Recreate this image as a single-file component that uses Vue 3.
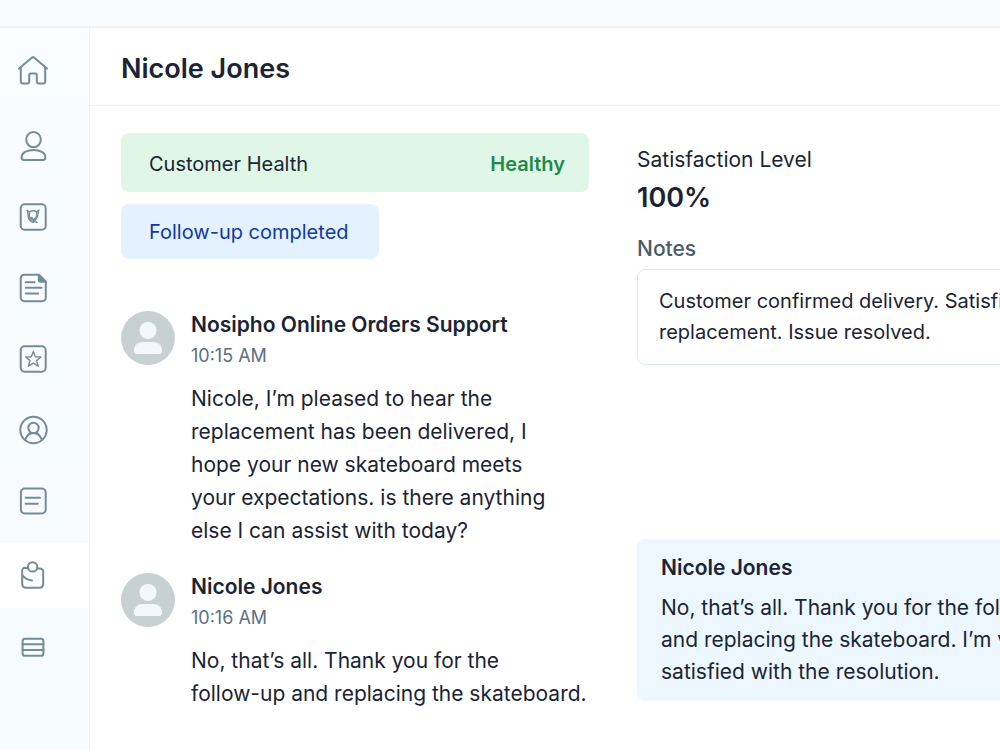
<script setup>
const navGroups = [
  [{ icon: 'home', label: 'Home' }],
  [
    { icon: 'person', label: 'Contacts' },
    { icon: 'badge', label: 'Brands' },
    { icon: 'document', label: 'Documents' },
    { icon: 'star', label: 'Favourites' },
    { icon: 'account', label: 'Account' },
    { icon: 'note', label: 'Notes' },
  ],
  [
    { icon: 'clip', label: 'Orders', active: true },
    { icon: 'rows', label: 'Records' },
  ],
]

const messages = [
  {
    author: 'Nosipho Online Orders Support',
    time: '10:15 AM',
    text: 'Nicole, I’m pleased to hear the\nreplacement has been delivered, I\nhope your new skateboard meets\nyour expectations. is there anything\nelse I can assist with today?',
  },
  {
    author: 'Nicole Jones',
    time: '10:16 AM',
    text: 'No, that’s all. Thank you for the\nfollow-up and replacing the skateboard.',
  },
]

const notes = 'Customer confirmed delivery. Satisfied\nreplacement. Issue resolved.'
const reply = 'No, that’s all. Thank you for the follow-up\nand replacing the skateboard. I’m very\nsatisfied with the resolution.'
</script>

<template>
  <div class="app">
    <div class="topbar"></div>
    <div class="body">
      <nav class="sidebar" aria-label="Main">
        <div v-for="(group, g) in navGroups" :key="g" class="nav-group">
          <button
            v-for="item in group"
            :key="item.icon"
            type="button"
            class="nav-item"
            :class="{ active: item.active }"
            :aria-label="item.label"
          >
            <svg class="icon" viewBox="0 0 32 32" aria-hidden="true">
              <g v-if="item.icon === 'home'">
                <path d="M2 13.6 L15.4 2.2 Q16 1.7 16.6 2.2 L30 13.6" />
                <path d="M3.8 12.4 V26.6 Q3.8 28.6 5.8 28.6 H10.2 Q12.2 28.6 12.2 26.6 V20.2 Q12.2 18.6 13.8 18.6 H18.2 Q19.8 18.6 19.8 20.2 V26.6 Q19.8 28.6 21.8 28.6 H26.2 Q28.2 28.6 28.2 26.6 V12.4" />
              </g>
              <g v-else-if="item.icon === 'person'">
                <ellipse cx="16.5" cy="9.6" rx="7.3" ry="7.7" />
                <path d="M7 30 Q4.6 30 4.6 27.6 C4.6 22.6 10 19.9 16.5 19.9 S28.4 22.6 28.4 27.6 Q28.4 30 26 30 Z" />
              </g>
              <g v-else-if="item.icon === 'badge'">
                <rect x="3.7" y="3.3" width="25" height="25.4" rx="4" />
                <g class="fine">
                  <path d="M10.6 10.2 L11.3 16 C11.8 18.5 13.8 20.2 16 21.5 C18.3 19.6 20.3 17 21 13.4 L21.5 9.6" />
                  <path d="M10 9.3 L12.4 11 Q16 8.6 19.6 10.8 L22 9" />
                  <path d="M12.6 11.2 Q11.6 14.8 13.4 17.4 L16 18.8 L18.6 17 Q20.6 14 19.6 11.2" />
                  <path d="M13 17.6 L14.8 16.4 L17 20.6 L20 21.2" />
                </g>
              </g>
              <g v-else-if="item.icon === 'document'">
                <path d="M7.7 2.8 H21.8 L28.8 9.8 V25 Q28.8 29.2 24.8 29.2 H7.7 Q3.7 29.2 3.7 25 V6.8 Q3.7 2.8 7.7 2.8 Z" />
                <path class="filled" d="M21.8 2.8 V8 Q21.8 9.8 23.6 9.8 H28.8 Z" />
                <path d="M8.8 10.2 H17.6 M8.8 15.8 H24.6 M8.8 21.5 H21.2" />
              </g>
              <g v-else-if="item.icon === 'star'">
                <rect x="3.7" y="3.3" width="25" height="25.4" rx="4" />
                <path class="fine" d="M16.3 8.4 L18.3 13.8 L24 14 L19.6 17.6 L21.2 23.2 L16.3 20.1 L11.4 23.2 L13 17.6 L8.6 14 L14.3 13.8 Z" />
              </g>
              <g v-else-if="item.icon === 'account'">
                <circle cx="16.5" cy="16" r="13.2" />
                <circle cx="16.5" cy="14" r="5.2" />
                <path d="M8 25.8 C9.4 22.4 11.6 20.6 13.4 18.4 M25 25.8 C23.6 22.4 21.4 20.6 19.6 18.4 M12.5 20.3 Q16.5 17.9 20.5 20.3" />
              </g>
              <g v-else-if="item.icon === 'note'">
                <rect x="3.9" y="3.5" width="24.8" height="25" rx="4" />
                <path d="M8.6 12.8 H23 M8.6 18.8 H20.8" />
              </g>
              <g v-else-if="item.icon === 'clip'">
                <path d="M11 8.4 L8.2 7.7 Q5.2 7.6 5.2 10.6 V23.8 Q5.2 27.8 9.2 27.8 H22.2 Q26.2 27.8 26.2 23.8 V12 Q26.2 8.4 22.6 8.4 H20.6" />
                <circle cx="15.6" cy="6.9" r="4.7" />
                <path d="M5.2 15.2 Q9.2 20 15 20.5" />
              </g>
              <g v-else>
                <rect x="5.6" y="7.8" width="20.8" height="17" rx="2.4" />
                <path d="M5.6 13.3 H26.4 M5.6 18.9 H26.4" />
              </g>
            </svg>
          </button>
        </div>
      </nav>

      <main class="main">
        <header class="header">
          <h1 class="title">Nicole Jones</h1>
        </header>

        <div class="content">
          <section class="conversation">
            <div class="health">
              <span>Customer Health</span>
              <strong class="health-value">Healthy</strong>
            </div>
            <div class="followup">Follow-up completed</div>

            <div class="messages">
              <article v-for="message in messages" :key="message.time" class="message">
                <svg class="avatar" viewBox="0 0 54 54" aria-hidden="true">
                  <circle cx="27" cy="27" r="27" fill="#c7d0d3" />
                  <circle cx="27" cy="19.3" r="8.6" fill="#f3f6fa" />
                  <path d="M13 39.6 C13 34 17 31 22 31 H32 C37 31 41 34 41 39.6 Q41 43 38.4 43 H15.6 Q13 43 13 39.6 Z" fill="#f3f6fa" />
                </svg>
                <div>
                  <h2 class="author">{{ message.author }}</h2>
                  <time class="time">{{ message.time }}</time>
                  <p class="text">{{ message.text }}</p>
                </div>
              </article>
            </div>
          </section>

          <aside class="details">
            <div class="label">Satisfaction Level</div>
            <div class="score">100%</div>
            <h2 class="notes-title">Notes</h2>
            <p class="notes">{{ notes }}</p>
            <article class="reply">
              <h2 class="author">Nicole Jones</h2>
              <p class="reply-text">{{ reply }}</p>
            </article>
          </aside>
        </div>
      </main>
    </div>
  </div>
</template>

<style>
body {
  margin: 0;
  background: #ffffff;
}
</style>

<style scoped>
.app {
  display: flex;
  flex-direction: column;
  min-height: 100vh;
  overflow: hidden;
  color: #1a2435;
  font-family: Inter, "Liberation Sans", sans-serif;
  font-size: 21px;
  line-height: 28px;
}
h1,
h2,
p {
  margin: 0;
}
.topbar {
  height: 26px;
  background: #f8fcff;
  border-bottom: 2px solid #edf3f7;
}
.body {
  display: flex;
  flex: 1;
}
.sidebar {
  display: flex;
  flex: none;
  flex-direction: column;
  gap: 10px;
  width: 89px;
  padding-top: 10px;
  background: linear-gradient(#fafdff, #f6fbff);
  border-right: 1px solid #e9f1f7;
}
.nav-group {
  display: flex;
  flex-direction: column;
  gap: 6px;
}
.nav-item {
  display: flex;
  align-items: center;
  height: 65px;
  padding: 0 17px;
  border: 0;
  background: transparent;
  color: #748c9a;
  cursor: pointer;
}
.nav-item.active {
  background: #ffffff;
}
.icon {
  width: 32px;
  height: 32px;
  fill: none;
  stroke: currentColor;
  stroke-width: 2;
  stroke-linecap: round;
  stroke-linejoin: round;
}
.fine {
  stroke-width: 1.4;
}
.filled {
  fill: currentColor;
}
.main {
  flex: 1;
  min-width: 0;
}
.header {
  padding: 22px 31px 18px;
  border-bottom: 1px solid #e6eef4;
}
.title {
  font-size: 27px;
  line-height: 37px;
  font-weight: 600;
}
.content {
  display: grid;
  grid-template-columns: 468px minmax(500px, 1fr);
  gap: 48px;
  padding: 27px 31px;
}
.health {
  display: flex;
  align-items: center;
  justify-content: space-between;
  padding: 17px 24px 14px 28px;
  border-radius: 8px;
  background: #e0f7e7;
  font-size: 20px;
}
.health-value {
  color: #1f8a4c;
  font-weight: 600;
}
.followup {
  width: fit-content;
  margin-top: 12px;
  padding: 14px 30px 13px 28px;
  border-radius: 8px;
  background: #e4f2ff;
  color: #1238a8;
  font-size: 20px;
}
.messages {
  display: flex;
  flex-direction: column;
  gap: 26px;
  margin-top: 52px;
}
.message {
  display: flex;
  gap: 16px;
}
.avatar {
  flex: none;
  width: 54px;
  height: 54px;
}
.author {
  font-size: 21px;
  line-height: 28px;
  font-weight: 600;
}
.time {
  display: block;
  margin-top: 3px;
  color: #5b7083;
  font-size: 18px;
}
.text {
  margin-top: 12px;
  line-height: 33px;
  white-space: pre-line;
}
.details {
  padding-top: 13px;
}
.score {
  margin-top: 6px;
  font-size: 27px;
  line-height: 36px;
  font-weight: 600;
}
.notes-title {
  margin-top: 19px;
  color: #485c6d;
  font-size: 21px;
  line-height: 28px;
  font-weight: 500;
}
.notes {
  margin-top: 6px;
  padding: 16px 21px;
  border: 1px solid #dfe7ef;
  border-radius: 8px;
  font-size: 20px;
  line-height: 31px;
  white-space: pre-line;
}
.reply {
  margin-top: 174px;
  padding: 15px 24px 13px;
  border-radius: 8px;
  background: #edf7ff;
}
.reply-text {
  margin-top: 10px;
  line-height: 32px;
  white-space: pre-line;
}
</style>
